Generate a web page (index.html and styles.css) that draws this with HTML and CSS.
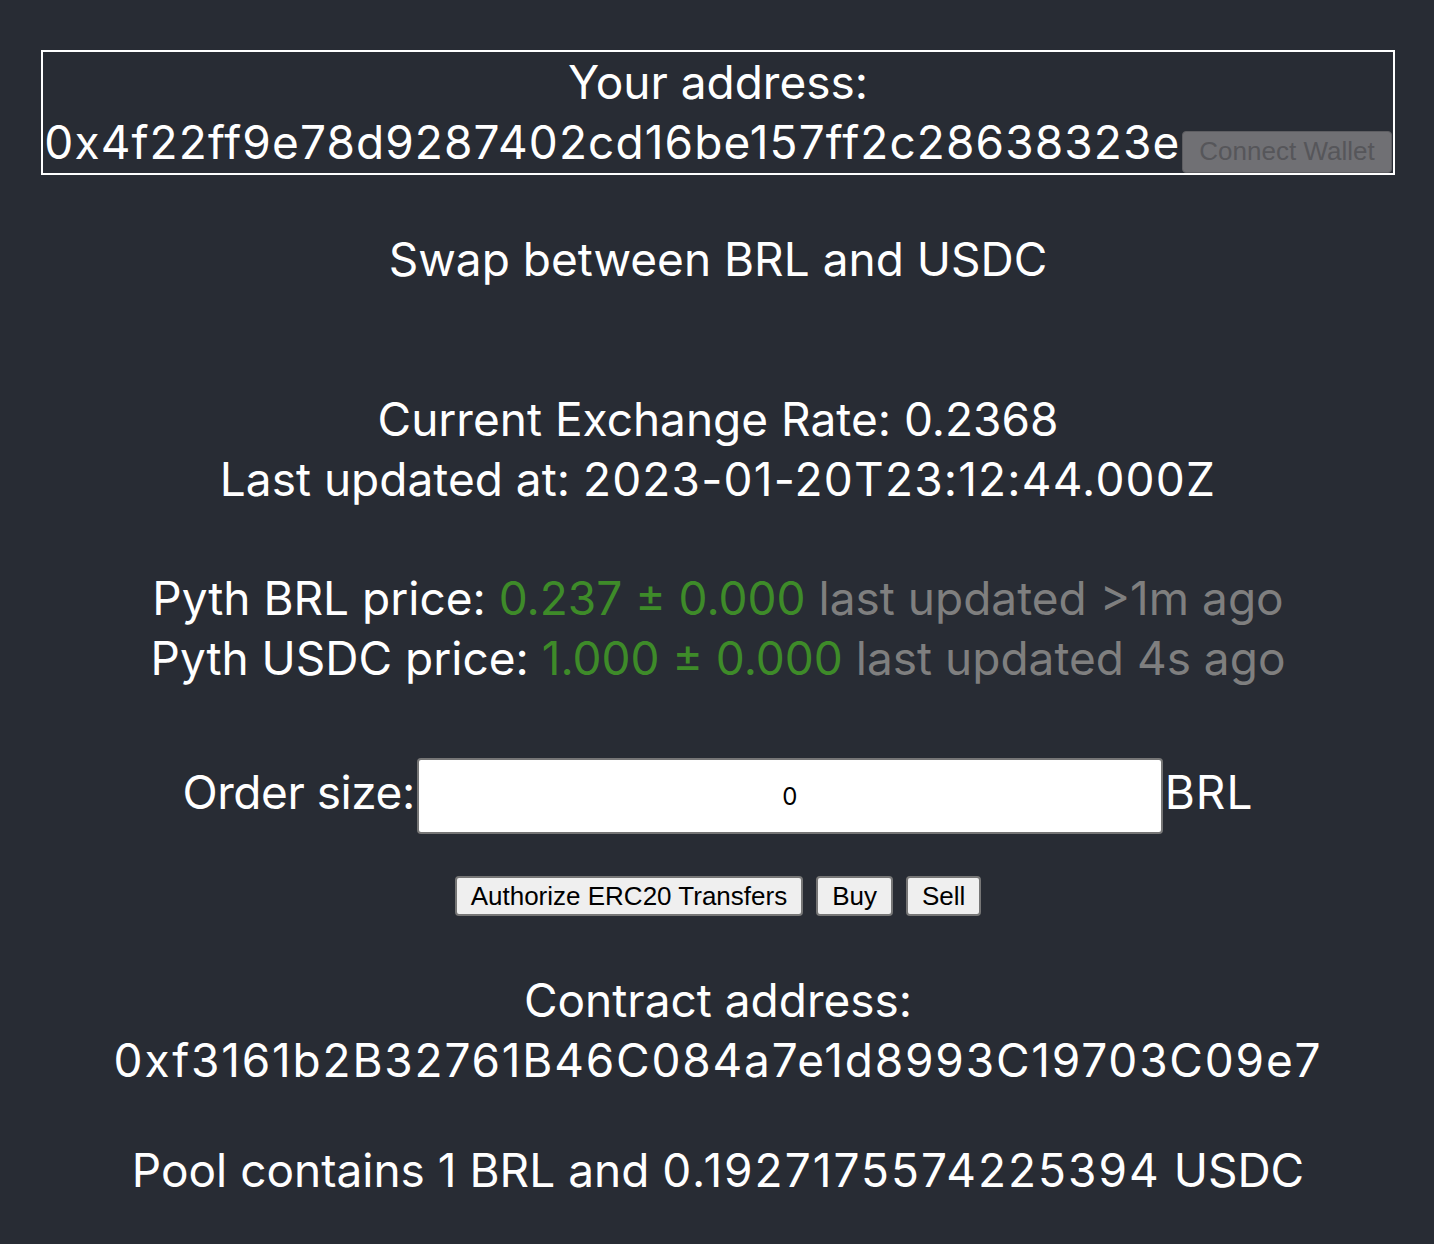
FILE: index.html
```html
<!DOCTYPE html>
<html lang="en">
<head>
<meta charset="utf-8">
<title>Swap</title>
<link rel="stylesheet" href="styles.css">
</head>
<body>
<div class="app">
  <div class="wallet">
    <div class="line">Your address:</div>
    <div class="line"><span class="addr">0x4f22ff9e78d9287402cd16be157ff2c28638323e</span><button class="connect" disabled>Connect Wallet</button></div>
  </div>
  <div class="title line">Swap between BRL and USDC</div>
  <div class="rate">
    <div class="line">Current Exchange Rate: 0.2368</div>
    <div class="line">Last updated at: <span class="stamp">2023-01-20T23:12:44.000Z</span></div>
  </div>
  <div class="pyth">
    <div class="line">Pyth BRL price: <span class="green">0.237 ± 0.000</span> <span class="gray">last updated &gt;1m ago</span></div>
    <div class="line">Pyth USDC price: <span class="green">1.000 ± 0.000</span> <span class="gray">last updated 4s ago</span></div>
  </div>
  <div class="order">
    <span class="label label-left">Order size:</span><input class="size" type="text" value="0"><span class="label label-right">BRL</span>
  </div>
  <div class="actions">
    <button class="btn">Authorize ERC20 Transfers</button>
    <button class="btn">Buy</button>
    <button class="btn">Sell</button>
  </div>
  <div class="contract">
    <div class="line">Contract address:</div>
    <div class="line"><span class="hex">0xf3161b2B32761B46C084a7e1d8993C19703C09e7</span></div>
  </div>
  <div class="pool line">Pool contains 1 BRL and <span class="num">0.1927175574225394</span> USDC</div>
</div>
</body>
</html>
```
FILE: styles.css
```css
html, body {
  margin: 0;
  padding: 0;
  background: #282c34;
}
body {
  min-height: 1244px;
  color: #ffffff;
  font-family: "Inter", "Noto Sans", sans-serif;
  font-size: 46px;
  text-align: center;
}
.app {
  padding: 50px 39px 40px 41px;
}
.line {
  line-height: 60px;
  white-space: nowrap;
}
.wallet {
  border: 2px solid #ffffff;
  height: 121px;
}
.addr {
  letter-spacing: 1.1px;
}
.stamp {
  letter-spacing: 1.2px;
}
.hex {
  letter-spacing: 1.8px;
}
.num {
  letter-spacing: 2px;
}
.connect {
  font-family: "Liberation Sans", Arial, sans-serif;
  font-size: 26px;
  height: 42px;
  padding: 0 16px;
  margin-left: 2px;
  background: #707074;
  color: #56565a;
  border: 1px solid #5e5e62;
  border-radius: 4px;
  vertical-align: -1px;
}
.title {
  margin-top: 54px;
}
.rate {
  margin-top: 100px;
}
.pyth {
  margin-top: 59px;
}
.green {
  color: #3e8b29;
}
.gray {
  color: #7f7f7f;
}
.order {
  margin-top: 70px;
  display: flex;
  justify-content: center;
  align-items: center;
  height: 76px;
}
.label {
  line-height: 60px;
  margin-top: -8px;
}
.label-left {
  letter-spacing: -0.45px;
}
.label-right {
  letter-spacing: 1px;
}
.size {
  box-sizing: border-box;
  width: 746px;
  height: 76px;
  margin: 0 2px;
  border: 2px solid #767676;
  border-radius: 4px;
  background: #ffffff;
  color: #000000;
  font-family: "Inter", "Noto Sans", sans-serif;
  font-size: 24px;
  text-align: center;
  padding: 0;
}
.actions {
  margin-top: 42px;
  display: flex;
  justify-content: center;
  gap: 13px;
  height: 40px;
}
.btn {
  font-family: "Liberation Sans", Arial, sans-serif;
  font-size: 26px;
  height: 40px;
  padding: 0 14px;
  background: #efefef;
  color: #000000;
  border: 2px solid #767676;
  border-radius: 4px;
}
.contract {
  margin-top: 54px;
}
.pool {
  margin-top: 50px;
}
```
